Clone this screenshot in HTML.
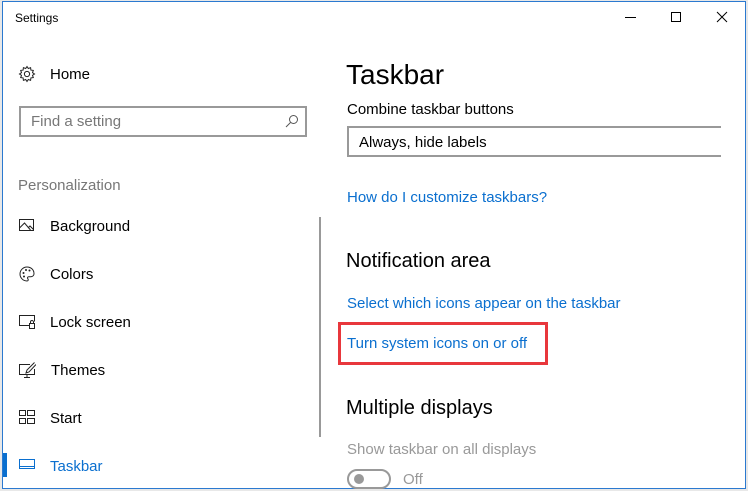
<!DOCTYPE html>
<html><head><meta charset="utf-8"><style>
*{margin:0;padding:0;box-sizing:border-box}
body{width:748px;height:491px;background:#e8e8e8;position:relative;overflow:hidden;font-family:"Liberation Sans",sans-serif;color:#000}
.win{position:absolute;left:2px;top:1px;width:744px;height:488px;background:#fff;border:1px solid #2b79d0}
.t{position:absolute;white-space:nowrap;margin-top:1px}
.nav{font-size:15px;left:48px}
.ic{position:absolute;left:18px}
.link{color:#0a6fcf;font-size:15px}
</style></head><body>
<div class="win"></div>
<div class="t" style="left:15px;top:10px;font-size:12px">Settings</div>
<div style="position:absolute;left:625px;top:17px;width:11px;height:1px;background:#000"></div>
<div style="position:absolute;left:671px;top:12px;width:10px;height:10px;border:1px solid #000"></div>
<svg style="position:absolute;left:716px;top:11px" width="12" height="12"><path d="M1 1L11 11M11 1L1 11" stroke="#000" stroke-width="1"/></svg>

<svg class="ic" style="top:65px" width="18" height="18" viewBox="0 0 18 18"><circle cx="9" cy="9" r="2.6" fill="none" stroke="#222"/><path d="M9 1.5l1.3 2 2.3-.8.3 2.4 2.4.3-.8 2.3 2 1.3-2 1.3.8 2.3-2.4.3-.3 2.4-2.3-.8L9 16.5l-1.3-2-2.3.8-.3-2.4-2.4-.3.8-2.3-2-1.3 2-1.3-.8-2.3 2.4-.3.3-2.4 2.3.8z" fill="none" stroke="#222" stroke-width="1"/></svg>
<div class="t nav" style="left:50px;top:65px">Home</div>
<div style="position:absolute;left:19px;top:106px;width:288px;height:31px;border:2px solid #999"></div>
<div class="t" style="left:31px;top:112px;font-size:15px;color:#777">Find a setting</div>
<svg style="position:absolute;left:285px;top:114px" width="14" height="14"><circle cx="8.5" cy="5.5" r="4" fill="none" stroke="#555"/><path d="M5.5 8.5L1 13" stroke="#555"/></svg>
<div class="t" style="left:18px;top:176px;font-size:15px;color:#777">Personalization</div>

<svg class="ic" style="top:218px" width="18" height="16"><rect x="1.5" y="1.5" width="14" height="11" fill="none" stroke="#222"/><path d="M1.5 10l5-5 6 7M10 10l2-2 3.5 3.5" fill="none" stroke="#222"/></svg>
<div class="t nav" style="left:50px;top:217px">Background</div>
<svg class="ic" style="top:265px" width="18" height="18"><path d="M9 2a7 7 0 1 0 0 14c1.5 0 1.5-1.5.8-2.3-.7-.8-.2-2 1-2H13a3 3 0 0 0 3-3C16 4.8 13 2 9 2z" fill="none" stroke="#222"/><circle cx="5.5" cy="8" r="1" fill="#222"/><circle cx="8" cy="5" r="1" fill="#222"/><circle cx="11.5" cy="5.5" r="1" fill="#222"/><circle cx="6" cy="11.5" r="1" fill="#222"/></svg>
<div class="t nav" style="left:50px;top:265px">Colors</div>
<svg class="ic" style="top:314px" width="18" height="16"><path d="M11 11.5H1.5V1.5h15v6" fill="none" stroke="#222"/><rect x="11.5" y="9.5" width="5" height="5" fill="none" stroke="#222"/><path d="M12.5 9.5V8a1.5 1.5 0 0 1 3 0v1.5" fill="none" stroke="#222"/></svg>
<div class="t nav" style="left:50px;top:313px">Lock screen</div>
<svg class="ic" style="top:361px" width="18" height="18"><path d="M12 3.5H1.5v10h15V8" fill="none" stroke="#222"/><path d="M6 16.5h6M9 13.5v3" stroke="#222"/><path d="M16.5 1.5L9 9l-1 3 3-1 7-7.5" fill="none" stroke="#222"/></svg>
<div class="t nav" style="left:51px;top:361px">Themes</div>
<svg class="ic" style="top:409px" width="18" height="16"><rect x="1.5" y="1.5" width="6" height="5" fill="none" stroke="#222"/><rect x="9.5" y="1.5" width="7" height="5" fill="none" stroke="#222"/><rect x="1.5" y="9.5" width="6" height="5" fill="none" stroke="#222"/><rect x="9.5" y="9.5" width="7" height="5" fill="none" stroke="#222"/></svg>
<div class="t nav" style="left:50px;top:409px">Start</div>
<div style="position:absolute;left:3px;top:453px;width:4px;height:24px;background:#0a6fcf"></div>
<svg class="ic" style="top:458px" width="18" height="12"><rect x="1.5" y="1.5" width="15" height="9" fill="none" stroke="#0a6fcf"/><path d="M1.5 8.5h15" stroke="#0a6fcf"/></svg>
<div class="t nav" style="left:50px;top:457px;color:#0a6fcf">Taskbar</div>
<div style="position:absolute;left:319px;top:217px;width:2px;height:220px;background:#999"></div>

<div class="t" style="left:346px;top:58px;font-size:28px">Taskbar</div>
<div class="t" style="left:347px;top:100px;font-size:15px">Combine taskbar buttons</div>
<div style="position:absolute;left:347px;top:126px;width:374px;height:31px;border:2px solid #999;border-right:none"></div>
<div class="t" style="left:359px;top:133px;font-size:15px">Always, hide labels</div>
<div class="t link" style="left:347px;top:188px">How do I customize taskbars?</div>
<div class="t" style="left:346px;top:249px;font-size:20px">Notification area</div>
<div class="t link" style="left:347px;top:294px">Select which icons appear on the taskbar</div>
<div style="position:absolute;left:338px;top:322px;width:210px;height:43px;border:3px solid #e8373c"></div>
<div class="t link" style="left:347px;top:334px">Turn system icons on or off</div>
<div class="t" style="left:346px;top:396px;font-size:20px">Multiple displays</div>
<div class="t" style="left:347px;top:440px;font-size:15px;color:#999">Show taskbar on all displays</div>
<div style="position:absolute;left:347px;top:469px;width:44px;height:20px;border:2px solid #999;border-radius:10px"></div>
<div style="position:absolute;left:354px;top:474px;width:10px;height:10px;border-radius:50%;background:#999"></div>
<div class="t" style="left:403px;top:470px;font-size:15px;color:#999">Off</div>
</body></html>
